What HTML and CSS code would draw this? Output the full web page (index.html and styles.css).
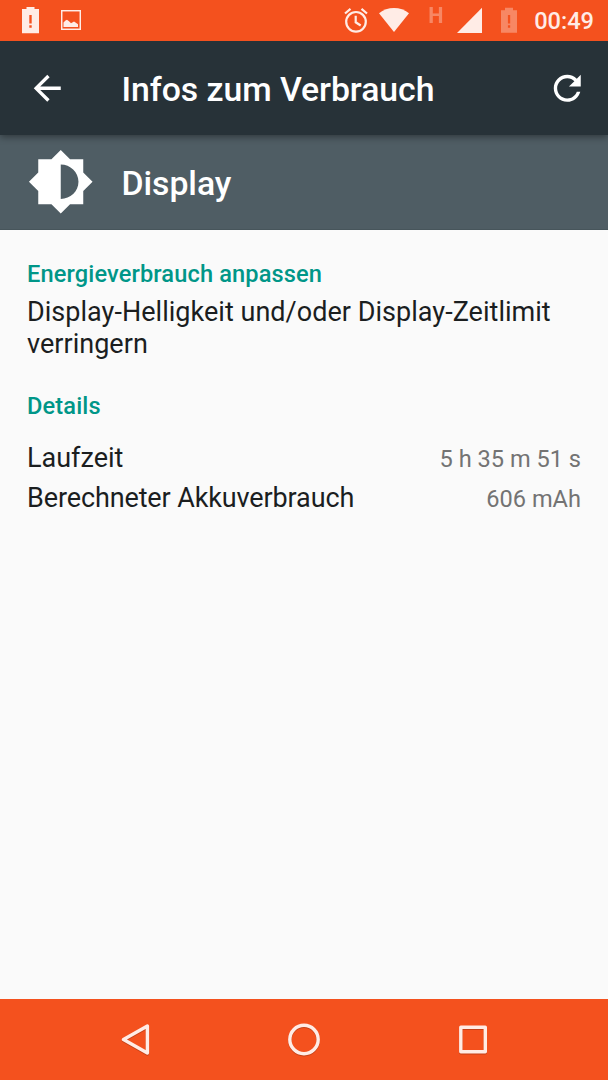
FILE: index.html
```html
<!DOCTYPE html>
<html lang="de">
<head>
  <meta charset="UTF-8" />
  <meta name="viewport" content="width=device-width, initial-scale=1" />
  <title>Infos zum Verbrauch</title>
  <link rel="stylesheet" href="styles.css">
</head>

<body>
  <!-- Status bar -->
  <div class="status-bar">
    <div class="status-left">
      <svg width="18" height="28" viewBox="0 0 18 28" fill="currentColor">
        <path fill-rule="evenodd" d="M4.500 1h8v2H17v24.300H0V3h4.500zM7.300 9v8.500h2.400V9zM7.300 19.200v2.600h2.400v-2.600z" />
      </svg>
      <svg width="20" height="20" viewBox="0 0 20 20">
        <rect x=".7" y=".7" width="18.600" height="18.600" fill="none" stroke="currentColor" stroke-width="1.500" />
        <path d="M2.500 17v-4.500l2-2 1.500-.8 2 1.500 2 2 3-1.800 1.500 1 2.500 1.800V17z" fill="currentColor" />
      </svg>
    </div>
    <div class="status-right">
      <svg class="alarm" width="24" height="26" viewBox="0 0 24 26" fill="none" stroke="currentColor" stroke-width="2.200">
        <circle cx="12" cy="14.800" r="9.800" />
        <path d="M11.700 8.800v6.500l5 3.200M1 6.500l5.500-4.700M23 6.500l-5.500-4.700" />
      </svg>
      <svg class="wifi" width="30" height="26" viewBox="0 0 30 26" fill="currentColor">
        <path d="M15 25L0 6.300C4.200 2.800 9.500 1 15 1s10.800 1.800 15 5.300z" />
      </svg>
      <span class="network">H</span>
      <svg class="signal" width="25" height="26" viewBox="0 0 25 26" fill="currentColor">
        <path d="M25 .8V26H0z" />
      </svg>
      <svg class="battery" width="16" height="26" viewBox="0 0 16 26" fill="currentColor">
        <path fill-rule="evenodd" d="M4 .8h8v2.500h4v22.500H0V3.300h4zM6.900 8v8.500h2.300V8zM6.900 18.300v2.500h2.300v-2.500z" />
      </svg>
      <span class="clock">00:49</span>
    </div>
  </div>

  <header class="app-bar">
    <svg class="icon" viewBox="0 0 24 24" fill="currentColor">
      <path d="M20 11H7.830l5.590-5.590L12 4l-8 8 8 8 1.410-1.410L7.830 13H20v-2z" />
    </svg>
    <h1 class="title">Infos zum Verbrauch</h1>
    <svg class="icon refresh" viewBox="0 0 24 24" fill="currentColor">
      <path d="M17.650 6.350C16.200 4.900 14.210 4 12 4c-4.420 0-7.990 3.580-7.990 8s3.570 8 7.990 8c3.730 0 6.840-2.550 7.730-6h-2.080c-.82 2.330-3.040 4-5.650 4-3.310 0-6-2.690-6-6s2.690-6 6-6c1.660 0 3.140.69 4.220 1.780L13 11h7V4l-2.350 2.350z" />
    </svg>
  </header>

  <section class="app-header">
    <svg class="app-icon" viewBox="0 0 24 24" fill="currentColor">
      <path d="M20 15.310L23.310 12 20 8.690V4h-4.690L12 .69 8.690 4H4v4.690L.69 12 4 15.310V20h4.690L12 23.310 15.310 20H20v-4.690zM12 18.100V5.900c3.400 0 6.300 2.700 6.300 6.100s-2.900 6.100-6.300 6.100z" />
    </svg>
    <h2 class="title">Display</h2>
  </section>

  <main class="content">
    <h3 class="section-title">Energieverbrauch anpassen</h3>
    <p class="description">Display-Helligkeit und/oder Display-Zeitlimit verringern</p>

    <h3 class="section-title details-title">Details</h3>
    <div class="detail-row">
      <span>Laufzeit</span>
      <span class="value">5 h 35 m 51 s</span>
    </div>
    <div class="detail-row">
      <span class="label-long">Berechneter Akkuverbrauch</span>
      <span class="value">606 mAh</span>
    </div>
  </main>

  <!-- Back, home, recent apps -->
  <nav class="nav-bar">
    <svg class="nav-icon" viewBox="0 0 36 36">
      <path d="M30.400 4v27L6.500 17.500z" />
    </svg>
    <svg class="nav-icon" viewBox="0 0 36 36">
      <circle cx="18" cy="17.500" r="14.200" />
    </svg>
    <svg class="nav-icon" viewBox="0 0 36 36">
      <rect x="5.800" y="5.300" width="24.500" height="24.500" />
    </svg>
  </nav>
</body>
</html>
```

FILE: styles.css
```css
* {
  box-sizing: border-box;
}

body {
  margin: 0;
  height: 100vh;
  display: flex;
  flex-direction: column;
  font-family: Roboto, "Noto Sans", sans-serif;
  background-color: #fafafa;
  color: #1b1e1f;
  overflow: hidden;
}

svg {
  display: block;
  flex-shrink: 0;
}

h1, h2, h3, p {
  margin: 0;
}

/* Status bar */
.status-bar {
  position: relative;
  z-index: 2;
  height: 40.5px;
  flex-shrink: 0;
  display: flex;
  justify-content: space-between;
  padding: 0 14px 0 22px;
  background-color: #f4511e;
  color: #ffece6;
}

.status-left,
.status-right {
  display: flex;
  align-items: center;
}

.status-left {
  gap: 21px;
}

.alarm {
  margin-right: 11px;
}

.network {
  width: 14px;
  margin: -9px 15px 0 19px;
  font-size: 21.5px;
  font-weight: 700;
  line-height: 20px;
  opacity: 0.35;
}

.signal {
  margin-right: 19px;
}

.battery {
  margin-right: 17px;
  opacity: 0.35;
}

.clock {
  padding-top: 2px;
  font-size: 23.6px;
  font-weight: 500;
}

/* Header */
.app-bar {
  position: relative;
  height: 94.5px;
  flex-shrink: 0;
  display: flex;
  align-items: center;
  padding: 0 21px 0 27px;
  background-color: #273238;
  color: #fff;
  box-shadow: 0 2px 7px rgba(0, 0, 0, 0.4);
}

.icon {
  width: 40.5px;
  height: 40.5px;
}

.app-bar .title {
  margin-left: 54px;
}

.refresh {
  margin-left: auto;
}

.title {
  padding-top: 5px;
  font-size: 33.8px;
  font-weight: 500;
  line-height: 40px;
  letter-spacing: -0.05px;
}

.app-header {
  height: 94.5px;
  flex-shrink: 0;
  display: flex;
  align-items: center;
  gap: 27px;
  padding-left: 27px;
  background-color: #4f5d64;
  color: #fff;
  border-bottom: 1px solid #47555b;
}

.app-icon {
  width: 67.5px;
  height: 67.5px;
}

/* Content */
.content {
  flex: 1;
  padding: 30px 27px 0;
}

.section-title {
  font-size: 23.6px;
  font-weight: 500;
  line-height: 28px;
  letter-spacing: 0.13px;
  color: #009688;
}

.description {
  margin-top: 8px;
  font-size: 27px;
  line-height: 32px;
  letter-spacing: 0.03px;
}

.details-title {
  margin: 32px 0 18px;
}

.detail-row {
  display: flex;
  justify-content: space-between;
  align-items: baseline;
  height: 40px;
  font-size: 27px;
  line-height: 40px;
}

.label-long {
  letter-spacing: -0.12px;
}

.value {
  font-size: 23.6px;
  color: #737373;
}

/* Navigation bar */
.nav-bar {
  height: 81px;
  flex-shrink: 0;
  display: flex;
  justify-content: center;
  align-items: center;
  gap: 133px;
  background-color: #f4511e;
}

.nav-icon {
  width: 36px;
  height: 36px;
  fill: none;
  stroke: #ffece6;
  stroke-width: 3.4;
  stroke-linejoin: round;
  filter: drop-shadow(0 1px 0.5px rgba(0, 0, 0, 0.2));
}
```
